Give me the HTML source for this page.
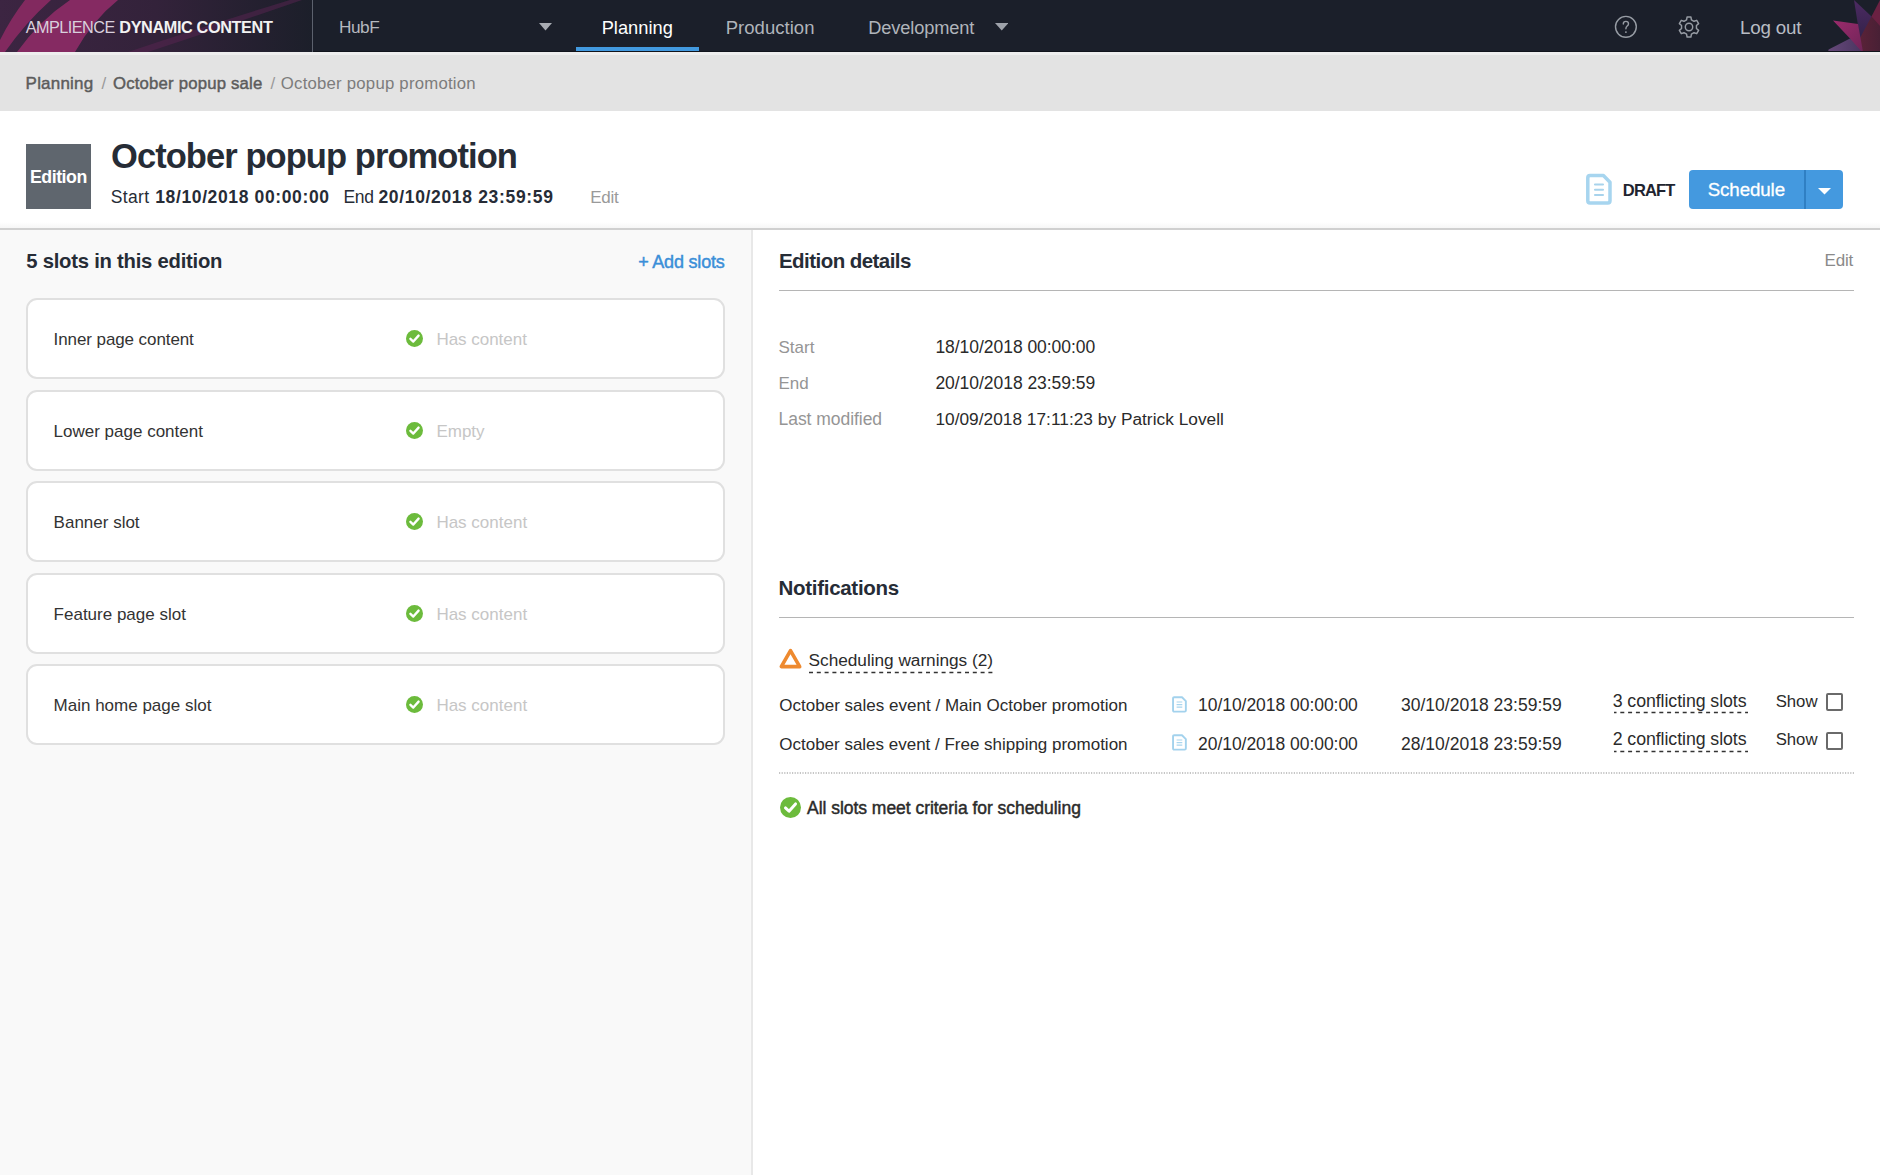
<!DOCTYPE html>
<html><head><meta charset="utf-8">
<style>
*{box-sizing:border-box;margin:0;padding:0}
html,body{width:1880px;height:1175px;overflow:hidden;background:#fff;font-family:"Liberation Sans",sans-serif}
.t{position:absolute;white-space:pre;line-height:normal}
.ic{position:absolute;display:block}
.bx{position:absolute}
.card{position:absolute;left:26px;width:699px;height:81px;background:#fff;border:2px solid #e0e0e0;border-radius:11px}
.dash{position:absolute;height:2px;background-image:linear-gradient(90deg,#3a3a3a 0,#3a3a3a 3px,transparent 3px);background-size:6px 2px;background-repeat:repeat-x}
.cbx{position:absolute;width:17.5px;height:17.5px;border:2px solid #6a6a6a;border-radius:2px;background:#fff}
</style></head><body>
<!-- nav -->
<div class="bx" style="left:0;top:0;width:1880px;height:52px;background:#1b1f2a"></div>
<svg class="ic" style="left:0;top:0" width="312" height="52" viewBox="0 0 312 52">
  <defs>
    <linearGradient id="lg" x1="0" y1="0" x2="1" y2="0">
      <stop offset="0" stop-color="#3c2542"/><stop offset="0.5" stop-color="#33223a"/><stop offset="1" stop-color="#1c1f2a"/>
    </linearGradient>
    <linearGradient id="band" x1="0" y1="1" x2="1" y2="0">
      <stop offset="0" stop-color="#9a2c6e"/><stop offset="1" stop-color="#7a2a60"/>
    </linearGradient>
  </defs>
  <rect width="312" height="52" fill="url(#lg)"/>
  <path d="M25 0 L51 0 Q26 22 5 52 L0 52 L0 40 Q11 18 25 0 Z" fill="#82295f"/>
  <path d="M70 0 L118 0 Q93 20 75 52 L17 52 Q40 20 70 0 Z" fill="#852a62"/>
  <path d="M128 52 Q205 26 290 0 L302 0 Q215 30 148 52 Z" fill="#5a2452" opacity="0.5"/>
</svg>
<div class="bx" style="left:312px;top:0;width:1px;height:52px;background:#5c616d"></div>
<svg class="ic" style="left:539px;top:23px" width="13" height="7.5" viewBox="0 0 13 7.5"><path d="M0 0 H13 L6.5 7.5 Z" fill="#a9acb3"/></svg>
<div class="bx" style="left:576px;top:47px;width:123px;height:5px;background:#4299df"></div>
<svg class="ic" style="left:994.5px;top:23px" width="13.5" height="7.5" viewBox="0 0 13.5 7.5"><path d="M0 0 H13.5 L6.75 7.5 Z" fill="#9ea2aa"/></svg>
<svg class="ic" style="left:1613px;top:14px" width="26" height="26" viewBox="0 0 26 26"><circle cx="12.9" cy="12.8" r="10.4" fill="none" stroke="#979ca4" stroke-width="1.4"/><path d="M10.3 10.0 Q10.3 7.4 12.9 7.4 Q15.5 7.4 15.5 9.8 Q15.5 11.2 14.0 12.2 Q12.9 13.0 12.9 14.8" fill="none" stroke="#979ca4" stroke-width="1.4" stroke-linecap="round"/><circle cx="12.9" cy="18.1" r="0.95" fill="#979ca4"/></svg>
<svg class="ic" style="left:1675.6px;top:13.8px" width="26" height="26" viewBox="-13 -13 26 26">
  <path d="M-2.42 -7.20 L-1.91 -10.02 L1.91 -10.02 L2.42 -7.20 L5.03 -5.70 L7.72 -6.66 L9.63 -3.35 L7.45 -1.50 L7.45 1.50 L9.63 3.35 L7.72 6.66 L5.03 5.70 L2.42 7.20 L1.91 10.02 L-1.91 10.02 L-2.42 7.20 L-5.03 5.70 L-7.72 6.66 L-9.63 3.35 L-7.45 1.50 L-7.45 -1.50 L-9.63 -3.35 L-7.72 -6.66 L-5.03 -5.70 Z" fill="none" stroke="#979ca4" stroke-width="1.45" stroke-linejoin="round"/>
  <circle cx="0" cy="0" r="3.7" fill="none" stroke="#979ca4" stroke-width="1.45"/>
</svg>
<svg class="ic" style="left:1820px;top:0" width="60" height="52" viewBox="1820 0 60 52">
  <defs>
    <linearGradient id="sg1" x1="0" y1="0" x2="0" y2="1"><stop offset="0" stop-color="#4c2a62"/><stop offset="1" stop-color="#33224a"/></linearGradient>
    <linearGradient id="sg2" x1="0" y1="0" x2="1" y2="1"><stop offset="0" stop-color="#9c2b6c"/><stop offset="1" stop-color="#6e2458"/></linearGradient>
    <linearGradient id="sg3" x1="0" y1="0" x2="1" y2="0"><stop offset="0" stop-color="#66497a"/><stop offset="1" stop-color="#4a3560"/></linearGradient>
    <linearGradient id="sg4" x1="0" y1="0" x2="1" y2="0"><stop offset="0" stop-color="#5c2238"/><stop offset="1" stop-color="#482035"/></linearGradient>
  </defs>
  <polygon points="1880,4 1880,52 1862,52 1858,24 1871.5,16.4" fill="url(#sg4)"/>
  <polygon points="1871.5,16.4 1880,0 1880,26" fill="#6a2142"/>
  <polygon points="1854,0 1871.5,16.4 1860,38" fill="url(#sg1)"/>
  <polygon points="1833,20.4 1858,24 1863,52 1856,52 1850,38.5" fill="url(#sg2)"/>
  <polygon points="1828.6,49.6 1850,38.5 1862,52 1828,52" fill="url(#sg3)"/>
</svg>
<!-- breadcrumb -->
<div class="bx" style="left:0;top:52px;width:1880px;height:59px;background:#e3e3e3"></div>
<div class="bx" style="left:0;top:52px;width:1880px;height:2.5px;background:#eeeeee"></div>
<div class="bx" style="left:313px;top:51px;width:1567px;height:1px;background:#11141c"></div>
<!-- header -->
<div class="bx" style="left:0;top:222px;width:1880px;height:6px;background:linear-gradient(180deg,rgba(0,0,0,0),rgba(0,0,0,0.035))"></div>
<div class="bx" style="left:0;top:228px;width:1880px;height:2px;background:#d0d0d0"></div>
<div class="bx" style="left:26px;top:144px;width:65px;height:65px;background:#5f666e"></div>
<svg class="ic" style="left:1584px;top:172px" width="30" height="35" viewBox="0 0 30 35"><path d="M3.8 5.8 Q3.8 3.6 6 3.6 L19.4 3.6 L26 10.2 L26 28.8 Q26 31 23.8 31 L6 31 Q3.8 31 3.8 28.8 Z" fill="#fff" stroke="#a7d5ef" stroke-width="3.5" stroke-linejoin="round"/><path d="M11 12.5 H19 M11 17.7 H19 M11 23 H19" stroke="#a8d3ec" stroke-width="2.1" stroke-linecap="round"/></svg>
<div class="bx" style="left:1689px;top:170px;width:154px;height:39px;background:#4499df;border-radius:4px"></div>
<div class="bx" style="left:1804px;top:170px;width:2px;height:39px;background:#2f7fc3"></div>
<svg class="ic" style="left:1818px;top:188px" width="13" height="6.5" viewBox="0 0 13 6.5"><path d="M0 0 H13 L6.5 6.5 Z" fill="#fff"/></svg>
<!-- left panel -->
<div class="bx" style="left:0;top:230px;width:751px;height:945px;background:#f9f9f9"></div>
<div class="bx" style="left:751px;top:230px;width:2px;height:945px;background:#e8e8e8"></div>
<div class='card' style='top:298px'></div><div class='card' style='top:390px'></div><div class='card' style='top:481px'></div><div class='card' style='top:573px'></div><div class='card' style='top:664px'></div>
<svg class='ic' style='left:406.0px;top:330.0px' width='17' height='17' viewBox='0 0 20 20'><circle cx='10' cy='10' r='10' fill='#6cbb3c'/><path d='M5.2 10.4 L8.6 13.6 L14.8 6.6' fill='none' stroke='#fff' stroke-width='2.8' stroke-linecap='round' stroke-linejoin='round'/></svg><svg class='ic' style='left:406.0px;top:422.0px' width='17' height='17' viewBox='0 0 20 20'><circle cx='10' cy='10' r='10' fill='#6cbb3c'/><path d='M5.2 10.4 L8.6 13.6 L14.8 6.6' fill='none' stroke='#fff' stroke-width='2.8' stroke-linecap='round' stroke-linejoin='round'/></svg><svg class='ic' style='left:406.0px;top:513.0px' width='17' height='17' viewBox='0 0 20 20'><circle cx='10' cy='10' r='10' fill='#6cbb3c'/><path d='M5.2 10.4 L8.6 13.6 L14.8 6.6' fill='none' stroke='#fff' stroke-width='2.8' stroke-linecap='round' stroke-linejoin='round'/></svg><svg class='ic' style='left:406.0px;top:605.0px' width='17' height='17' viewBox='0 0 20 20'><circle cx='10' cy='10' r='10' fill='#6cbb3c'/><path d='M5.2 10.4 L8.6 13.6 L14.8 6.6' fill='none' stroke='#fff' stroke-width='2.8' stroke-linecap='round' stroke-linejoin='round'/></svg><svg class='ic' style='left:406.0px;top:696.0px' width='17' height='17' viewBox='0 0 20 20'><circle cx='10' cy='10' r='10' fill='#6cbb3c'/><path d='M5.2 10.4 L8.6 13.6 L14.8 6.6' fill='none' stroke='#fff' stroke-width='2.8' stroke-linecap='round' stroke-linejoin='round'/></svg>
<!-- right panel -->
<div class="bx" style="left:779px;top:290px;width:1075px;height:1px;background:#b5b5b5"></div>
<div class="bx" style="left:779px;top:617px;width:1075px;height:1px;background:#b5b5b5"></div>
<svg class="ic" style="left:778px;top:647px" width="25" height="23" viewBox="0 0 25 23"><path d="M12.5 3.6 L21.7 19.6 L3.3 19.6 Z" fill="none" stroke="#ee8a2f" stroke-width="3.6" stroke-linejoin="round"/></svg>
<svg class='ic' style='left:1172px;top:695.6px' width='15' height='17' viewBox='0 0 15 17'><path d='M1.05 2.4 Q1.05 1.25 2.2 1.25 L10 1.25 L13.85 5.1 L13.85 14.5 Q13.85 15.65 12.7 15.65 L2.2 15.65 Q1.05 15.65 1.05 14.5 Z' fill='#fff' stroke='#a3d2ed' stroke-width='1.9' stroke-linejoin='round'/><path d='M4.6 6 H10.3 M4.6 8.6 H10.3 M4.6 11.1 H10.3' stroke='#a9d5ee' stroke-width='1.2'/></svg><svg class='ic' style='left:1172px;top:734.3px' width='15' height='17' viewBox='0 0 15 17'><path d='M1.05 2.4 Q1.05 1.25 2.2 1.25 L10 1.25 L13.85 5.1 L13.85 14.5 Q13.85 15.65 12.7 15.65 L2.2 15.65 Q1.05 15.65 1.05 14.5 Z' fill='#fff' stroke='#a3d2ed' stroke-width='1.9' stroke-linejoin='round'/><path d='M4.6 6 H10.3 M4.6 8.6 H10.3 M4.6 11.1 H10.3' stroke='#a9d5ee' stroke-width='1.2'/></svg>
<svg class='ic' style='left:808.8px;top:670.8px' width='184' height='3'><line x1='0' y1='1.5' x2='184' y2='1.5' stroke='#333' stroke-width='1.6' stroke-dasharray='4 3.8' stroke-dashoffset='0'/></svg><svg class='ic' style='left:1613.5px;top:711.3px' width='134' height='3'><line x1='0' y1='1.5' x2='134' y2='1.5' stroke='#333' stroke-width='1.6' stroke-dasharray='4 3.8' stroke-dashoffset='1.5'/></svg><svg class='ic' style='left:1613.5px;top:750.0px' width='134' height='3'><line x1='0' y1='1.5' x2='134' y2='1.5' stroke='#333' stroke-width='1.6' stroke-dasharray='4 3.8' stroke-dashoffset='1.5'/></svg>
<div class='cbx' style='left:1825.5px;top:693.4px'></div><div class='cbx' style='left:1825.5px;top:732.1px'></div>
<svg class="ic" style="left:778.5px;top:771px" width="1076" height="4"><line x1="0" y1="1.9" x2="1076" y2="1.9" stroke="#b3b3b3" stroke-width="1.5" stroke-dasharray="1.2 1.4"/></svg>
<svg class='ic' style='left:779.5px;top:796.5px' width='21' height='21' viewBox='0 0 20 20'><circle cx='10' cy='10' r='10' fill='#6cbb3c'/><path d='M5.2 10.4 L8.6 13.6 L14.8 6.6' fill='none' stroke='#fff' stroke-width='2.8' stroke-linecap='round' stroke-linejoin='round'/></svg>
<div class='t' style='left:25.7px;top:17.9px;font-size:16.25px;font-weight:400;color:#d9d0dd;letter-spacing:-0.53px;-webkit-text-stroke:0px #d9d0dd'>AMPLIENCE</div>
<div class='t' style='left:119.3px;top:17.9px;font-size:16.25px;font-weight:700;color:#f2f2f2;letter-spacing:-0.38px;-webkit-text-stroke:0px #f2f2f2'>DYNAMIC CONTENT</div>
<div class='t' style='left:339.0px;top:16.6px;font-size:17.25px;font-weight:400;color:#b5b8be;letter-spacing:-0.47px;-webkit-text-stroke:0px #b5b8be'>HubF</div>
<div class='t' style='left:601.7px;top:16.5px;font-size:18.25px;font-weight:400;color:#ffffff;letter-spacing:0.01px;-webkit-text-stroke:0px #ffffff'>Planning</div>
<div class='t' style='left:725.7px;top:16.5px;font-size:18.5px;font-weight:400;color:#b0b4bb;letter-spacing:0.04px;-webkit-text-stroke:0px #b0b4bb'>Production</div>
<div class='t' style='left:868.2px;top:16.5px;font-size:18.25px;font-weight:400;color:#b0b4bb;letter-spacing:-0.14px;-webkit-text-stroke:0px #b0b4bb'>Development</div>
<div class='t' style='left:1739.9px;top:17.0px;font-size:18.75px;font-weight:400;color:#b8bcc4;letter-spacing:-0.17px;-webkit-text-stroke:0px #b8bcc4'>Log out</div>
<div class='t' style='left:25.6px;top:73.5px;font-size:17.0px;font-weight:400;color:#5c5c5c;letter-spacing:0.2px;-webkit-text-stroke:0.45px #5c5c5c'>Planning</div>
<div class='t' style='left:101.6px;top:73.5px;font-size:17.0px;font-weight:400;color:#9a9a9a;letter-spacing:0px;-webkit-text-stroke:0px #9a9a9a'>/</div>
<div class='t' style='left:113.0px;top:73.5px;font-size:16.75px;font-weight:400;color:#5c5c5c;letter-spacing:0.18px;-webkit-text-stroke:0.45px #5c5c5c'>October popup sale</div>
<div class='t' style='left:270.4px;top:73.5px;font-size:17.0px;font-weight:400;color:#9a9a9a;letter-spacing:0px;-webkit-text-stroke:0px #9a9a9a'>/</div>
<div class='t' style='left:280.8px;top:73.5px;font-size:16.75px;font-weight:400;color:#7c7c7c;letter-spacing:0.22px;-webkit-text-stroke:0px #7c7c7c'>October popup promotion</div>
<div class='t' style='left:30.0px;top:167.0px;font-size:17.75px;font-weight:700;color:#ffffff;letter-spacing:-0.48px;-webkit-text-stroke:0px #ffffff'>Edition</div>
<div class='t' style='left:111.0px;top:137.3px;font-size:34.5px;font-weight:700;color:#262c36;letter-spacing:-0.93px;-webkit-text-stroke:0px #262c36'>October popup promotion</div>
<div class='t' style='left:110.7px;top:187.4px;font-size:17.5px;font-weight:400;color:#262c36;letter-spacing:0.38px;-webkit-text-stroke:0px #262c36'>Start</div>
<div class='t' style='left:155.2px;top:187.4px;font-size:17.5px;font-weight:700;color:#262c36;letter-spacing:0.63px;-webkit-text-stroke:0px #262c36'>18/10/2018 00:00:00</div>
<div class='t' style='left:343.4px;top:187.4px;font-size:17.5px;font-weight:400;color:#262c36;letter-spacing:-0.3px;-webkit-text-stroke:0px #262c36'>End</div>
<div class='t' style='left:378.4px;top:187.4px;font-size:17.5px;font-weight:700;color:#262c36;letter-spacing:0.67px;-webkit-text-stroke:0px #262c36'>20/10/2018 23:59:59</div>
<div class='t' style='left:590.2px;top:188.1px;font-size:17.0px;font-weight:400;color:#9a9a9a;letter-spacing:-0.27px;-webkit-text-stroke:0px #9a9a9a'>Edit</div>
<div class='t' style='left:1622.8px;top:180.7px;font-size:16.5px;font-weight:700;color:#1f2430;letter-spacing:-0.82px;-webkit-text-stroke:0px #1f2430'>DRAFT</div>
<div class='t' style='left:1707.7px;top:178.7px;font-size:18.75px;font-weight:400;color:#ffffff;letter-spacing:-0.11px;-webkit-text-stroke:0.3px #ffffff'>Schedule</div>
<div class='t' style='left:26.3px;top:250.1px;font-size:20.25px;font-weight:700;color:#262c36;letter-spacing:-0.24px;-webkit-text-stroke:0px #262c36'>5 slots in this edition</div>
<div class='t' style='left:638.2px;top:251.7px;font-size:18.0px;font-weight:400;color:#3b8fd8;letter-spacing:-0.2px;-webkit-text-stroke:0.45px #3b8fd8'>+ Add slots</div>
<div class='t' style='left:53.6px;top:330.3px;font-size:17.0px;font-weight:400;color:#333333;letter-spacing:-0.09px;-webkit-text-stroke:0px #333333'>Inner page content</div>
<div class='t' style='left:436.4px;top:329.9px;font-size:17.0px;font-weight:400;color:#c6c6c6;letter-spacing:-0.02px;-webkit-text-stroke:0px #c6c6c6'>Has content</div>
<div class='t' style='left:53.6px;top:422.3px;font-size:17.0px;font-weight:400;color:#333333;letter-spacing:0px;-webkit-text-stroke:0px #333333'>Lower page content</div>
<div class='t' style='left:436.4px;top:421.9px;font-size:17.0px;font-weight:400;color:#c6c6c6;letter-spacing:0px;-webkit-text-stroke:0px #c6c6c6'>Empty</div>
<div class='t' style='left:53.6px;top:513.3px;font-size:17.0px;font-weight:400;color:#333333;letter-spacing:0px;-webkit-text-stroke:0px #333333'>Banner slot</div>
<div class='t' style='left:436.4px;top:512.9px;font-size:17.0px;font-weight:400;color:#c6c6c6;letter-spacing:0px;-webkit-text-stroke:0px #c6c6c6'>Has content</div>
<div class='t' style='left:53.6px;top:605.3px;font-size:17.0px;font-weight:400;color:#333333;letter-spacing:0px;-webkit-text-stroke:0px #333333'>Feature page slot</div>
<div class='t' style='left:436.4px;top:604.9px;font-size:17.0px;font-weight:400;color:#c6c6c6;letter-spacing:0px;-webkit-text-stroke:0px #c6c6c6'>Has content</div>
<div class='t' style='left:53.6px;top:696.3px;font-size:17.0px;font-weight:400;color:#333333;letter-spacing:0px;-webkit-text-stroke:0px #333333'>Main home page slot</div>
<div class='t' style='left:436.4px;top:695.9px;font-size:17.0px;font-weight:400;color:#c6c6c6;letter-spacing:0px;-webkit-text-stroke:0px #c6c6c6'>Has content</div>
<div class='t' style='left:779.0px;top:248.7px;font-size:20.5px;font-weight:700;color:#262c36;letter-spacing:-0.55px;-webkit-text-stroke:0px #262c36'>Edition details</div>
<div class='t' style='left:1824.5px;top:251.0px;font-size:17.0px;font-weight:400;color:#8a8a8a;letter-spacing:-0.17px;-webkit-text-stroke:0px #8a8a8a'>Edit</div>
<div class='t' style='left:778.5px;top:337.6px;font-size:17.0px;font-weight:400;color:#959595;letter-spacing:0px;-webkit-text-stroke:0px #959595'>Start</div>
<div class='t' style='left:935.4px;top:336.6px;font-size:17.5px;font-weight:400;color:#2a2a2a;letter-spacing:-0.04px;-webkit-text-stroke:0px #2a2a2a'>18/10/2018 00:00:00</div>
<div class='t' style='left:778.5px;top:374.0px;font-size:17.0px;font-weight:400;color:#959595;letter-spacing:0px;-webkit-text-stroke:0px #959595'>End</div>
<div class='t' style='left:935.4px;top:373.0px;font-size:17.5px;font-weight:400;color:#2a2a2a;letter-spacing:-0.04px;-webkit-text-stroke:0px #2a2a2a'>20/10/2018 23:59:59</div>
<div class='t' style='left:778.5px;top:409.2px;font-size:17.5px;font-weight:400;color:#959595;letter-spacing:-0.04px;-webkit-text-stroke:0px #959595'>Last modified</div>
<div class='t' style='left:935.4px;top:409.2px;font-size:17.25px;font-weight:400;color:#2a2a2a;letter-spacing:0.03px;-webkit-text-stroke:0px #2a2a2a'>10/09/2018 17:11:23 by Patrick Lovell</div>
<div class='t' style='left:778.6px;top:575.5px;font-size:20.5px;font-weight:700;color:#262c36;letter-spacing:-0.3px;-webkit-text-stroke:0px #262c36'>Notifications</div>
<div class='t' style='left:808.6px;top:650.0px;font-size:17.25px;font-weight:400;color:#2b2b2b;letter-spacing:-0.03px;-webkit-text-stroke:0px #2b2b2b'>Scheduling warnings (2)</div>
<div class='t' style='left:779.3px;top:695.9px;font-size:17.0px;font-weight:400;color:#2b2b2b;letter-spacing:0.01px;-webkit-text-stroke:0px #2b2b2b'>October sales event / Main October promotion</div>
<div class='t' style='left:1198.0px;top:694.9px;font-size:17.5px;font-weight:400;color:#2b2b2b;letter-spacing:-0.04px;-webkit-text-stroke:0px #2b2b2b'>10/10/2018 00:00:00</div>
<div class='t' style='left:1400.9px;top:694.9px;font-size:17.5px;font-weight:400;color:#2b2b2b;letter-spacing:0.02px;-webkit-text-stroke:0px #2b2b2b'>30/10/2018 23:59:59</div>
<div class='t' style='left:1612.7px;top:690.6px;font-size:17.75px;font-weight:400;color:#2b2b2b;letter-spacing:-0.07px;-webkit-text-stroke:0px #2b2b2b'>3 conflicting slots</div>
<div class='t' style='left:1775.7px;top:691.6px;font-size:16.75px;font-weight:400;color:#2b2b2b;letter-spacing:-0.03px;-webkit-text-stroke:0px #2b2b2b'>Show</div>
<div class='t' style='left:779.3px;top:734.6px;font-size:17.0px;font-weight:400;color:#2b2b2b;letter-spacing:-0.01px;-webkit-text-stroke:0px #2b2b2b'>October sales event / Free shipping promotion</div>
<div class='t' style='left:1198.0px;top:733.6px;font-size:17.5px;font-weight:400;color:#2b2b2b;letter-spacing:-0.04px;-webkit-text-stroke:0px #2b2b2b'>20/10/2018 00:00:00</div>
<div class='t' style='left:1400.9px;top:733.6px;font-size:17.5px;font-weight:400;color:#2b2b2b;letter-spacing:0.02px;-webkit-text-stroke:0px #2b2b2b'>28/10/2018 23:59:59</div>
<div class='t' style='left:1612.7px;top:729.3px;font-size:17.75px;font-weight:400;color:#2b2b2b;letter-spacing:-0.07px;-webkit-text-stroke:0px #2b2b2b'>2 conflicting slots</div>
<div class='t' style='left:1775.7px;top:730.3px;font-size:16.75px;font-weight:400;color:#2b2b2b;letter-spacing:-0.03px;-webkit-text-stroke:0px #2b2b2b'>Show</div>
<div class='t' style='left:807.1px;top:798.1px;font-size:17.5px;font-weight:400;color:#2b2b2b;letter-spacing:-0.04px;-webkit-text-stroke:0.45px #2b2b2b'>All slots meet criteria for scheduling</div>
</body></html>
